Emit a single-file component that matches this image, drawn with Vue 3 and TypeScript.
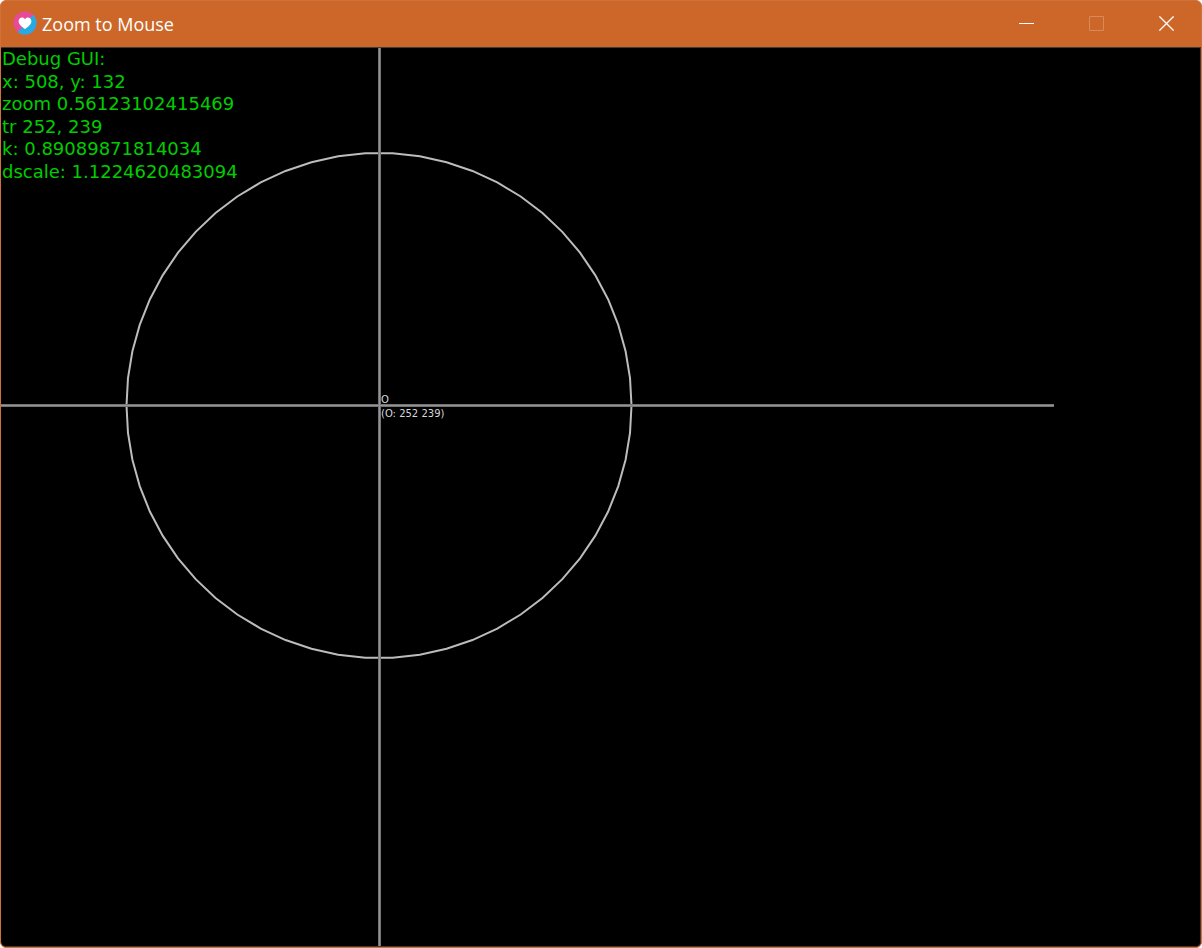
<script setup lang="ts">
import { computed, ref } from 'vue'

const mouse = ref({ x: 508, y: 132 })
const translate = ref({ x: 252, y: 239 })

const debugLines = computed<string[]>(() => [
  'Debug GUI:',
  `x: ${mouse.value.x}, y: ${mouse.value.y}`,
  'zoom 0.56123102415469',
  `tr ${translate.value.x}, ${translate.value.y}`,
  'k: 0.89089871814034',
  'dscale: 1.1224620483094',
])

const centre = { x: 378, y: 358.5 }
const radius = 252.5
const segments = 58

const circlePoints = Array.from({ length: segments }, (_, i) => {
  const angle = (i * 2 * Math.PI) / segments
  const x = centre.x + radius * Math.cos(angle)
  const y = centre.y + radius * Math.sin(angle)
  return `${x.toFixed(2)},${y.toFixed(2)}`
}).join(' ')
</script>

<template>
  <div class="window">
    <header class="titlebar">
      <svg class="logo" viewBox="0 0 24 24" aria-hidden="true">
        <defs>
          <clipPath id="disc"><circle cx="12" cy="12" r="11.5" /></clipPath>
        </defs>
        <g clip-path="url(#disc)">
          <rect width="24" height="24" fill="#e84a99" />
          <path d="M24 0 V24 H0 L7 19 L19 5 Z" fill="#27aae1" />
        </g>
        <path
          d="M12 18 C9 15.8 5.6 13.3 5.6 10.2 C5.6 6.4 10.1 5.2 12 8.2 C13.9 5.2 18.4 6.4 18.4 10.2 C18.4 13.3 15 15.8 12 18 Z"
          fill="#fff"
        />
      </svg>
      <h1 class="title">Zoom to Mouse</h1>
      <div class="controls">
        <button type="button" aria-label="Minimize">
          <svg viewBox="0 0 15 15"><path d="M0 7.5 H15" /></svg>
        </button>
        <button type="button" aria-label="Maximize" disabled>
          <svg viewBox="0 0 15 15"><path d="M.5 .5 H14.5 V14.5 H.5 Z" /></svg>
        </button>
        <button type="button" aria-label="Close">
          <svg viewBox="0 0 15 15"><path class="cross" d="M.4 .4 L14.6 14.6 M14.6 .4 L.4 14.6" /></svg>
        </button>
      </div>
    </header>
    <main class="canvas">
      <svg class="scene" aria-label="Zoomable scene">
        <polygon class="ring" :points="circlePoints" />
        <rect class="axis" x="0" y="357" width="1053" height="3" />
        <rect class="axis" x="377" y="0" width="3" height="100%" />
        <rect class="axis-core" x="0" y="358" width="1053" height="1" />
        <rect class="axis-core" x="378" y="0" width="1" height="100%" />
        <text x="380" y="356">O</text>
        <text x="380" y="370">(O: {{ translate.x }} {{ translate.y }})</text>
      </svg>
      <div class="debug">
        <span v-for="line in debugLines" :key="line">{{ line }}</span>
      </div>
    </main>
  </div>
</template>

<style>
body {
  background: #fff;
}
</style>

<style scoped>
.window {
  box-sizing: border-box;
  display: flex;
  flex-direction: column;
  min-height: 100vh;
  border: 1px solid #d0703a;
  border-radius: 6px;
  background: #cc6729;
  overflow: hidden;
}

.titlebar {
  display: flex;
  align-items: center;
  height: 46px;
  flex: none;
  color: #fff;
}

.logo {
  width: 24px;
  height: 24px;
  margin: 0 0 2px 12px;
}

.title {
  flex: 1;
  margin: 0 0 0 5px;
  font: 400 18px/24px "Open Sans", "Noto Sans", sans-serif;
}

.controls {
  display: flex;
  gap: 1px;
  align-self: flex-start;
  height: 45px;
}

.controls button {
  display: flex;
  align-items: center;
  justify-content: center;
  width: 69px;
  padding: 0;
  border: 0;
  background: none;
  color: #fff;
}

.controls button:disabled {
  color: #d98a5a;
}

.controls svg {
  width: 15px;
  height: 15px;
  fill: none;
  stroke: currentColor;
  stroke-width: 1;
}

.controls .cross {
  stroke-width: 1.3;
}

.canvas {
  position: relative;
  flex: 1;
  border-radius: 0 0 5px 5px;
  background: #000;
  overflow: hidden;
}

.canvas::after {
  content: "";
  position: absolute;
  inset: 0;
  border: solid #3c3c3c;
  border-width: 1px 1px 1px 0;
  border-radius: 0 0 5px 5px;
  pointer-events: none;
}

.scene {
  position: absolute;
  inset: 0;
  width: 100%;
  height: 100%;
}

.axis {
  fill: #747474;
}

.axis-core {
  fill: #949494;
}

.ring {
  fill: none;
  stroke: #bcbcbc;
  stroke-width: 2;
}

.scene text {
  fill: #d8d8d8;
  font: 10px "DejaVu Sans", sans-serif;
}

.debug {
  position: relative;
  display: grid;
  grid-template-rows: repeat(6, 1fr);
  align-items: center;
  height: 135px;
  padding: 1px 0 0 1px;
  color: #00cc00;
  font: 18px/22px "DejaVu Sans", sans-serif;
  white-space: nowrap;
}
</style>
